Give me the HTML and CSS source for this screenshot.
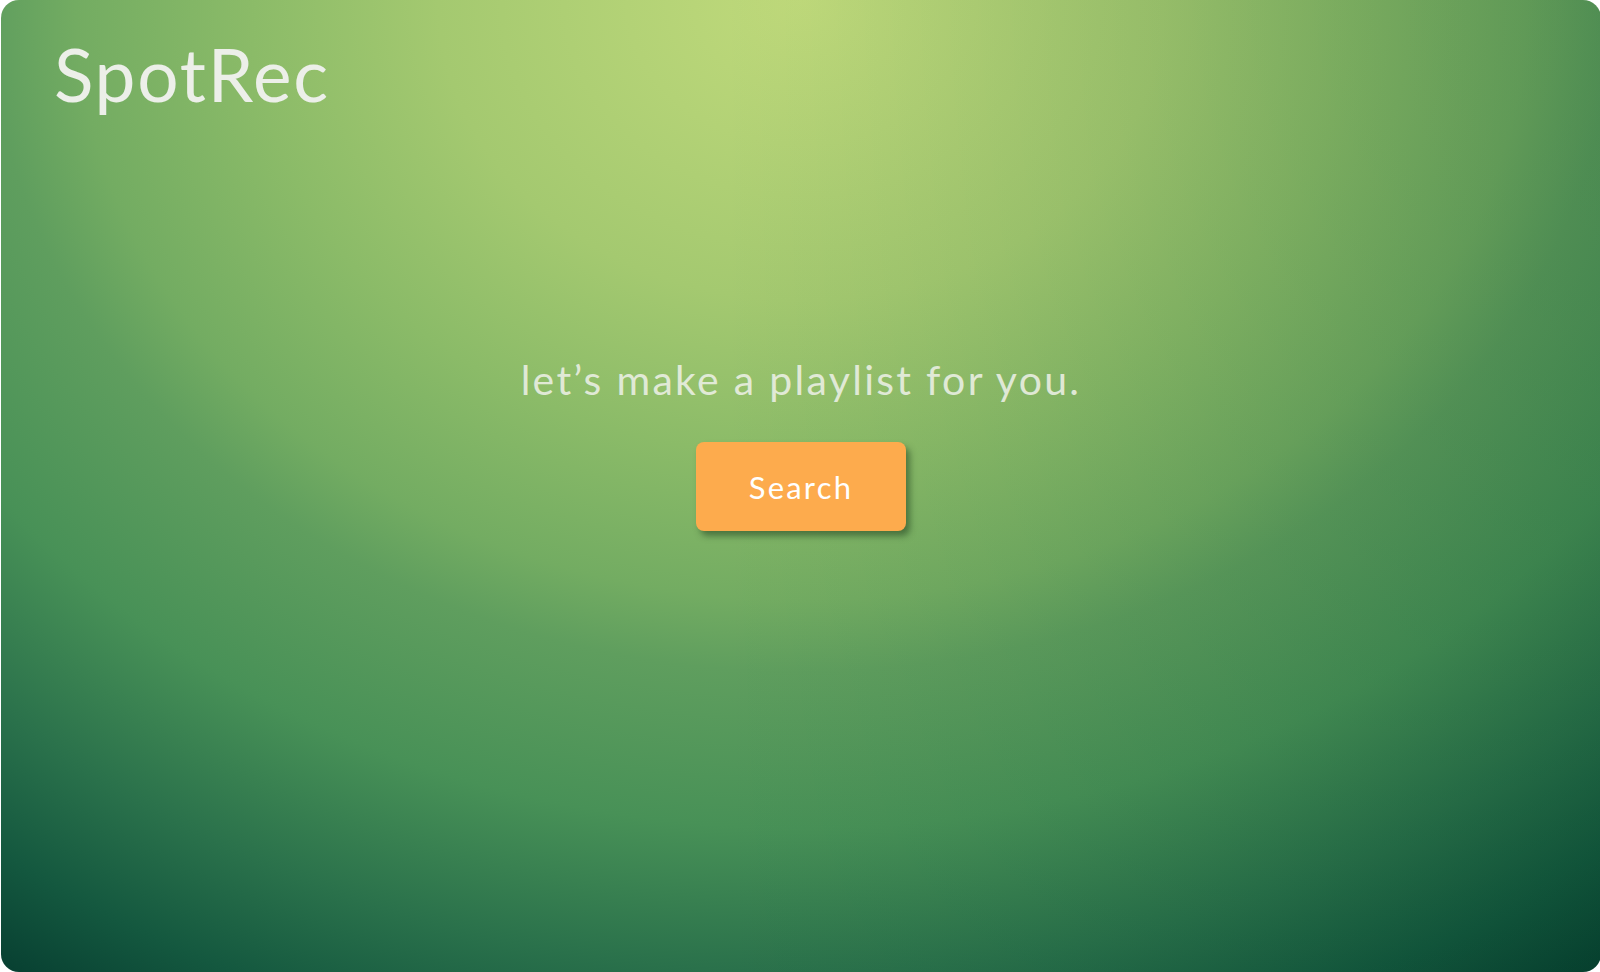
FILE: index.html
```html
<!DOCTYPE html>
<html lang="en">
<head>
<meta charset="utf-8">
<title>SpotRec</title>
<link rel="stylesheet" href="styles.css">
</head>
<body>
  <div class="panel">
    <header class="header">
      <div class="logo">SpotRec</div>
    </header>
    <main class="hero">
      <p class="tagline">let’s make a playlist for you.</p>
      <button class="search-btn" type="button">Search</button>
    </main>
  </div>
</body>
</html>
```

FILE: styles.css
```css
html, body {
  margin: 0;
  padding: 0;
  background: #ffffff;
}
body {
  width: 1600px;
  height: 972px;
  overflow: hidden;
  font-family: "Lato", "Noto Sans", sans-serif;
}
.panel {
  box-sizing: border-box;
  width: 1600px;
  height: 972px;
  margin-left: 1px;
  border-radius: 18px;
  overflow: hidden;
  display: flex;
  flex-direction: column;
  background:
    linear-gradient(90deg, rgba(0,0,0,0) 0%, rgba(0,0,0,0) 45%, rgba(0,60,30,0.18) 100%),
    radial-gradient(1450px 1200px at 50% 0%, #c0da7b 0%, #b3d276 12%, #a4c970 25%, #8bbb68 38%, #73ac62 50%, #5f9e5e 56%, #489157 69%, #2a714b 81%, #14583f 90%, #073f31 98%, #05392c 100%);
}
.header {
  padding: 34px 0 0 53px;
}
.logo {
  font-size: 73px;
  line-height: 80px;
  font-weight: 400;
  color: #ecefe9;
  letter-spacing: 1.8px;
}
.hero {
  display: flex;
  flex-direction: column;
  align-items: center;
  padding-top: 241px;
}
.tagline {
  margin: 0;
  font-size: 41px;
  line-height: 50px;
  letter-spacing: 2.3px;
  color: rgba(236, 240, 230, 0.88);
}
.search-btn {
  margin-top: 37px;
  width: 210px;
  height: 89px;
  border: none;
  border-radius: 8px;
  background: #fdab4d;
  color: #ffffff;
  font-family: "Lato", "Noto Sans", sans-serif;
  font-size: 31px;
  letter-spacing: 2.2px;
  box-shadow: 4px 5px 6px rgba(25, 55, 25, 0.5);
  cursor: pointer;
}
```
